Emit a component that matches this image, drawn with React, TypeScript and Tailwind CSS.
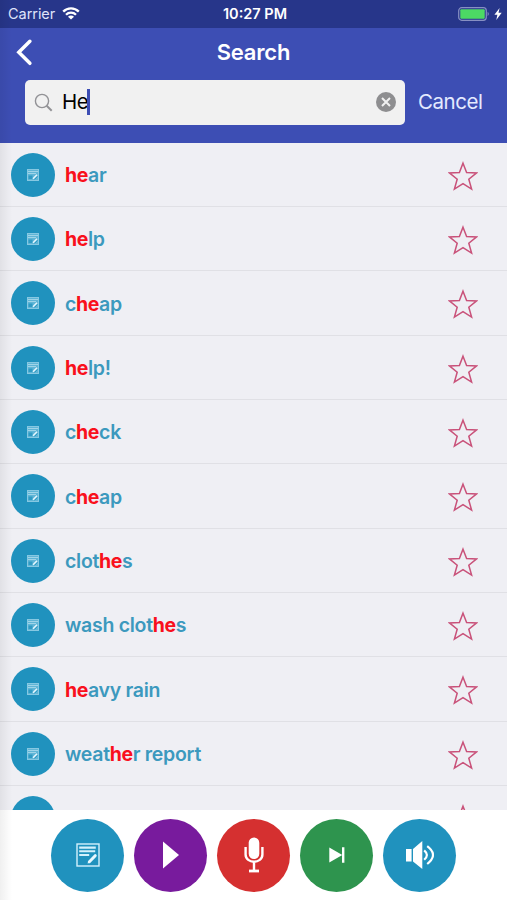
import type { ReactNode } from "react"

interface Word {
  before: string
  match: string
  after: string
}

const words: Word[] = [
  { before: "", match: "he", after: "ar" },
  { before: "", match: "he", after: "lp" },
  { before: "c", match: "he", after: "ap" },
  { before: "", match: "he", after: "lp!" },
  { before: "c", match: "he", after: "ck" },
  { before: "c", match: "he", after: "ap" },
  { before: "clot", match: "he", after: "s" },
  { before: "wash clot", match: "he", after: "s" },
  { before: "", match: "he", after: "avy rain" },
  { before: "weat", match: "he", after: "r report" },
  { before: "", match: "", after: "" },
]

function NoteIcon() {
  return (
    <svg viewBox="0 0 24 24" className="h-6 w-6" fill="none" stroke="#d3f1fc">
      <rect x="1" y="1" width="22" height="22" strokeWidth="1.4" />
      <path d="M3.2 4.6h16.6M3.2 8.2h16M3.2 12h10" strokeWidth="2.1" />
      <path d="M13.4 18.7l5.8-6" strokeWidth="3" stroke="#e8f8ff" strokeLinecap="round" />
      <path d="M11.6 20.4l.6-2.4 1.8 1.8z" fill="#e8f8ff" stroke="none" />
    </svg>
  )
}

function SmallNoteIcon() {
  return (
    <svg viewBox="0 0 12 12" className="h-3 w-3" fill="none">
      <rect x=".5" y=".5" width="11" height="11" fill="#5fb5d6" stroke="#86c8e2" />
      <path d="M1 2.5h10M1 4.5h8" stroke="#9fd4e8" />
      <path d="M1.5 6.5h4v3.5h-4z" fill="#2f9ac4" />
      <path d="M6 9.8l4-4" stroke="#e8f8ff" strokeWidth="1.5" />
      <path d="M7.6 10.4l3-3" stroke="#2f9ac4" />
    </svg>
  )
}

function StarIcon() {
  return (
    <svg viewBox="0 0 30 30" className="mt-[2px] h-[30px] w-[30px]" fill="none" stroke="#c9527a" strokeWidth="1.5">
      <path d="M15 2.2l3.6 9.3 10 .4-7.8 6.3 2.8 9.9-8.6-5.5-8.6 5.5 2.8-9.9-7.8-6.3 10-.4z" />
    </svg>
  )
}

function StatusBar() {
  return (
    <div className="grid h-7 grid-cols-[1fr_auto_1fr] items-center bg-[#27368a] pr-[5px] pb-px pl-[8px] text-[14.5px] text-white">
      <div className="flex items-center gap-[7px]">
        <span className="tracking-[-0.05px] text-[#dfe3fa]">Carrier</span>
        <svg viewBox="0 0 18 13" className="h-[13px] w-[18px]" fill="none" stroke="#fff" strokeWidth="2.3">
          <path d="M1.2 4.6a11 11 0 0 1 15.6 0M4 7.8a7 7 0 0 1 10 0" />
          <path d="M9 12.6L6 9.7a4.2 4.2 0 0 1 6 0z" fill="#fff" stroke="none" />
        </svg>
      </div>
      <span className="text-[14.5px] font-semibold whitespace-nowrap">10:27 PM</span>
      <div className="flex items-center justify-end gap-[4px]">
        <svg viewBox="0 0 32 14" className="h-[14px] w-[32px]">
          <rect x=".7" y=".7" width="27.6" height="12.6" rx="3" fill="none" stroke="#8790c3" strokeWidth="1.2" />
          <rect x="2.3" y="2.3" width="24.4" height="9.4" rx="1" fill="#4cd964" />
          <path d="M29.6 4.8q2.4 2.2 0 4.4z" fill="#8790c3" />
        </svg>
        <svg viewBox="0 0 8 12" className="h-3 w-2" fill="#fff">
          <path d="M5.6 0L.4 6.8h3L2.3 12l5.4-7.2H4.5z" />
        </svg>
      </div>
    </div>
  )
}

function Header() {
  return (
    <div className="h-[114.5px] shrink-0 bg-[#3d4eb4] pt-[8px]">
      <div className="grid h-8 grid-cols-[60px_1fr_60px] items-center">
        <svg viewBox="0 0 18 28" className="-mt-[2px] ml-[15px] h-7 w-[18px]" fill="none" stroke="#fff" strokeWidth="3.5">
          <path d="M14.9 3.3L3.8 14.3l11.1 11" strokeLinecap="round" />
        </svg>
        <h1 className="text-center text-[22px] font-semibold tracking-[-0.2px] text-white">Search</h1>
      </div>
      <div className="mt-[12px] flex items-center pl-[25px]">
        <div className="flex h-[44.5px] w-[379.5px] items-center rounded-[5px] bg-[#f1f1f1] pr-[9px] pl-[9px]">
          <svg viewBox="0 0 19 19" className="h-[19px] w-[19px]" fill="none" stroke="#929296" strokeWidth="1.4">
            <circle cx="8" cy="8" r="6.6" />
            <path d="M12.7 12.7l5 5" strokeWidth="2" />
          </svg>
          <span className="ml-[9px] text-[20.5px] tracking-[-0.6px] text-black">He</span>
          <span className="-ml-px h-[26px] w-[2.5px] bg-[#3d4eb4]" />
          <svg viewBox="0 0 20 20" className="ml-auto h-5 w-5">
            <circle cx="10" cy="10" r="10" fill="#8e8e90" />
            <path d="M6 6l8 8M14 6l-8 8" stroke="#f1f1f1" strokeWidth="2" />
          </svg>
        </div>
        <span className="ml-[13.5px] text-[20.5px] tracking-[-0.45px] text-[#e4eaff]">Cancel</span>
      </div>
    </div>
  )
}

function WordRow({ word }: { word: Word }) {
  return (
    <li className="flex h-[64.35px] shrink-0 items-center border-b border-[#e0e0e5] pt-px pr-[29px] pl-[11px]">
      <div className="flex h-11 w-11 items-center justify-center rounded-full bg-[#2092be]">
        <SmallNoteIcon />
      </div>
      <span className="mt-[2px] ml-[10px] flex-1 text-[19.5px] font-semibold tracking-[-0.28px] text-[#3c99be]">
        {word.before}
        <b className="font-bold tracking-[-0.4px] text-[#f9101c]">{word.match}</b>
        {word.after}
      </span>
      <StarIcon />
    </li>
  )
}

function RoundButton({ className, label, children }: { className: string; label: string; children: ReactNode }) {
  return (
    <button aria-label={label} className={`flex h-[73px] w-[73px] items-center justify-center rounded-full ${className}`}>
      {children}
    </button>
  )
}

function Controls() {
  return (
    <div className="flex h-[90px] shrink-0 items-center justify-center gap-[10px] bg-white">
      <RoundButton label="Notes" className="bg-[#2092be]">
        <NoteIcon />
      </RoundButton>
      <RoundButton label="Play" className="bg-[#781b9d]">
        <svg viewBox="0 0 16 28" className="h-7 w-4" fill="#fff">
          <path d="M0 .5L16 14 0 27.5z" />
        </svg>
      </RoundButton>
      <RoundButton label="Record" className="bg-[#d53030]">
        <svg viewBox="0 0 20 36" className="h-9 w-5">
          <rect x="4.7" y=".5" width="10.6" height="21.6" rx="5.3" fill="#fff" />
          <path d="M1.6 10v7.5c0 9.6 16.8 9.6 16.8 0V10M10 25v8" fill="none" stroke="#fff" strokeWidth="2.4" />
          <path d="M5 34h10" stroke="#fff" strokeWidth="2.8" />
        </svg>
      </RoundButton>
      <RoundButton label="Next" className="bg-[#2e944e]">
        <svg viewBox="0 0 16 16" className="h-4 w-4" fill="#fff">
          <path d="M.3.5L13.3 8 .3 15.5zM13 .3h2.4v15.4H13z" />
        </svg>
      </RoundButton>
      <RoundButton label="Sound" className="bg-[#2092be]">
        <svg viewBox="0 0 28 28" className="h-7 w-7" fill="#fff">
          <path d="M0 8h5.6v12.4H0zM7 8l9.3-8v28L7 20.4z" />
          <path d="M18.2 9.4q5.4 4.6 0 9.4M21.2 5.2q11.6 8.8 0 17.8" fill="none" stroke="#fff" strokeWidth="2.2" />
        </svg>
      </RoundButton>
    </div>
  )
}

export default function App() {
  return (
    <div className="relative flex h-[900px] w-[507px] flex-col overflow-hidden bg-[#efeff4] font-['Inter','Liberation_Sans',sans-serif]">
      <StatusBar />
      <Header />
      <ul className="flex min-h-0 flex-1 flex-col overflow-hidden">
        {words.map((word, i) => (
          <WordRow key={i} word={word} />
        ))}
      </ul>
      <Controls />
      {/* soft shadow along the left edge of the screen */}
      <div className="pointer-events-none absolute inset-y-0 left-0 w-3 bg-gradient-to-r from-black/6 to-transparent" />
    </div>
  )
}
